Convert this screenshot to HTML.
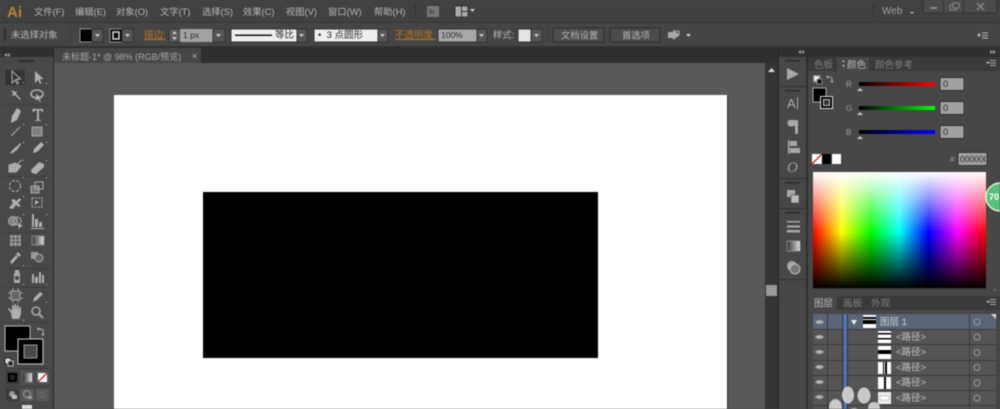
<!DOCTYPE html>
<html><head><meta charset="utf-8"><style>
html,body{margin:0;padding:0;background:#474747;width:1000px;height:409px;overflow:hidden}
svg{display:block;filter:blur(.45px)}
svg svg{filter:none}
text{font-family:"Liberation Sans","Noto Sans CJK SC",sans-serif;font-size:9.5px;fill:#bcbcbc}
.m{font-size:9.3px;fill:#b8b8b8}
.d{fill:#2c2c2c}
.i{fill:#b0b0b0}
.l{stroke:#383838;stroke-width:1}
.t{font-size:9.5px;fill:#2a2a2a}
</style></head><body>
<svg width="1000" height="409" viewBox="0 0 1000 409" xmlns="http://www.w3.org/2000/svg">
<defs>
<linearGradient id="hue"><stop offset="0" stop-color="#f00"/><stop offset=".165" stop-color="#ff0"/><stop offset=".335" stop-color="#0f0"/><stop offset=".5" stop-color="#0ff"/><stop offset=".67" stop-color="#00f"/><stop offset=".835" stop-color="#f0f"/><stop offset="1" stop-color="#f00"/></linearGradient>
<linearGradient id="v" x2="0" y2="1"><stop offset="0" stop-color="#fff"/><stop offset=".52" stop-color="#fff" stop-opacity="0"/><stop offset=".52" stop-color="#000" stop-opacity="0"/><stop offset="1" stop-color="#000"/></linearGradient>
<linearGradient id="rr"><stop offset="0" stop-color="#000"/><stop offset="1" stop-color="#f00"/></linearGradient>
<linearGradient id="gg"><stop offset="0" stop-color="#000"/><stop offset="1" stop-color="#0f0"/></linearGradient>
<linearGradient id="bb"><stop offset="0" stop-color="#000"/><stop offset="1" stop-color="#00f"/></linearGradient>
<linearGradient id="gr"><stop offset="0" stop-color="#333"/><stop offset="1" stop-color="#ddd"/></linearGradient>
</defs>

<!-- menu bar -->
<rect width="1000" height="23" fill="#414141"/>
<rect y="22" width="1000" height="1" fill="#363636"/>
<text x="7" y="17" style="font-size:15px;font-weight:bold;fill:#c08338">Ai</text>
<text class="m" x="34" y="15">文件(F)</text>
<text class="m" x="75" y="15">编辑(E)</text>
<text class="m" x="116" y="15">对象(O)</text>
<text class="m" x="160" y="15">文字(T)</text>
<text class="m" x="202" y="15">选择(S)</text>
<text class="m" x="243" y="15">效果(C)</text>
<text class="m" x="286" y="15">视图(V)</text>
<text class="m" x="328" y="15">窗口(W)</text>
<text class="m" x="374" y="15">帮助(H)</text>
<rect x="415" y="4" width="1" height="14" fill="#333"/>
<rect x="427" y="6" width="12" height="11" fill="#777"/><text x="429" y="14" style="font-size:6px;fill:#333">Br</text>
<rect x="455" y="6" width="13" height="11" fill="#aaa" stroke="#333"/><rect x="461" y="6" width="1" height="11" fill="#333"/><rect x="462" y="11" width="6" height="1" fill="#333"/>
<path d="M470 9h5l-2.500 3z" fill="#ccc"/>
<rect x="873" y="4" width="1" height="14" fill="#363636"/>
<text x="882" y="14" style="font-size:10px;fill:#a0a0a0">Web</text>
<path d="M910 12h4l-2 2z" fill="#bbb"/>
<rect x="923" y="-1" width="74" height="14" rx="2" fill="#4b4b4b" stroke="#333"/>
<rect x="943" y="0" width="1" height="13" fill="#333"/><rect x="963" y="0" width="1" height="13" fill="#333"/>
<rect x="930" y="7" width="7" height="2" fill="#888"/>
<rect x="950" y="5" width="6" height="5" fill="none" stroke="#888"/><rect x="953" y="3" width="6" height="5" fill="#4b4b4b" stroke="#888"/>
<path d="M977 3l7 7M984 3l-7 7" stroke="#888" stroke-width="1.500"/>

<!-- control bar -->
<rect y="23" width="1000" height="24" fill="#454545"/>
<rect y="46" width="1000" height="1" fill="#333"/>
<rect x="4" y="28" width="2" height="13" fill="#2e2e2e"/>
<text class="m" x="11" y="38">未选择对象</text>
<rect x="70" y="27" width="1" height="15" fill="#3a3a3a"/>
<rect x="80" y="29" width="12" height="13" fill="#000" stroke="#aaa" stroke-width=".8"/>
<rect x="92" y="29" width="11" height="13" fill="#555" stroke="#333"/><path d="M95 34h5l-2.500 3z" fill="#ccc"/>
<rect x="110" y="29" width="12" height="13" fill="#000" stroke="#aaa" stroke-width=".8"/><rect x="113" y="32" width="6" height="7" fill="#000" stroke="#ddd" stroke-width="1.500"/>
<rect x="122" y="29" width="11" height="13" fill="#555" stroke="#333"/><path d="M125 34h5l-2.500 3z" fill="#ccc"/>
<text x="144" y="38" style="fill:#b87524;text-decoration:underline">描边:</text>
<rect x="169" y="29" width="11" height="13" fill="#5a5a5a" stroke="#333"/>
<path d="M172 34l2.500-3 2.500 3zM172 37l2.500 3 2.500-3z" fill="#ccc"/>
<rect x="180" y="29" width="33" height="13" fill="#a2a2a2"/>
<text class="t" x="183" y="38" style="font-size:8.500px">1 px</text>
<rect x="213" y="29" width="12" height="13" fill="#555" stroke="#333"/><path d="M216 34h5l-2.500 3z" fill="#ccc"/>
<rect x="231" y="29" width="66" height="13" fill="#eee" stroke="#333"/>
<rect x="235" y="34.500" width="37" height="1.500" fill="#111"/>
<text class="t" x="275" y="38">等比</text>
<rect x="297" y="29" width="10" height="13" fill="#555" stroke="#333"/><path d="M299 34h5l-2.500 3z" fill="#ccc"/>
<rect x="314" y="29" width="64" height="13" fill="#eee" stroke="#333"/>
<text class="t" x="318" y="38" xml:space="preserve">•  3 点圆形</text>
<rect x="378" y="29" width="10" height="13" fill="#555" stroke="#333"/><path d="M380 34h5l-2.500 3z" fill="#ccc"/>
<text x="395" y="38" style="fill:#b87524;text-decoration:underline">不透明度:</text>
<rect x="438" y="29" width="39" height="13" fill="#a8a8a8" stroke="#333"/>
<text class="t" x="441" y="38" style="font-size:8.500px">100%</text>
<rect x="477" y="29" width="10" height="13" fill="#555" stroke="#333"/><path d="M479 34h5l-2.500 3z" fill="#ccc"/>
<text class="m" x="493" y="38">样式:</text>
<rect x="518" y="29" width="13" height="13" fill="#e4e4e4" stroke="#333"/>
<rect x="531" y="29" width="11" height="13" fill="#555" stroke="#333"/><path d="M534 34h5l-2.500 3z" fill="#ccc"/>
<rect x="547" y="27" width="1" height="15" fill="#3a3a3a"/>
<rect x="553" y="28" width="51" height="14" rx="1" fill="#4c4c4c" stroke="#2e2e2e"/>
<text class="m" x="561" y="38.500">文档设置</text>
<rect x="610" y="28" width="50" height="14" rx="1" fill="#4c4c4c" stroke="#2e2e2e"/>
<text class="m" x="622" y="38.500">首选项</text>
<path d="M668 32h5v-2l7 5-7 5v-2h-5z" fill="#aaa"/><path d="M674 31h5v4" stroke="#aaa" fill="none"/>
<path d="M686 34h5l-2.500 3z" fill="#ccc"/>
<path d="M977 35l3-2v4z" fill="#ccc"/><path d="M982 33h6M982 35.500h6M982 38h6" stroke="#bbb"/>

<!-- dark row -->
<rect y="47" width="1000" height="16" fill="#2f2f2f"/>
<rect x="54" y="48" width="147" height="15" fill="#464646"/>
<text class="m" x="62" y="60" style="font-size:9px;fill:#aaa">未标题-1* @ 98% (RGB/预览)</text>
<text x="192" y="59" style="font-size:9px;fill:#bbb">×</text>
<path d="M7 53l-3 2 3 2zM10 53l-3 2 3 2z" fill="#999"/>

<!-- canvas -->
<rect x="54" y="63" width="711" height="346" fill="#595959"/>
<rect x="114" y="95" width="613" height="314" fill="#fff"/>
<rect x="727" y="96" width="1" height="313" fill="#333"/>
<rect x="203" y="192" width="395" height="166" fill="#000"/>

<!-- scrollbar -->
<rect x="765" y="63" width="14" height="346" fill="#343434"/>
<path d="M768 72l3.500-4 3.500 4z" fill="#ddd"/>
<rect x="766" y="285" width="11" height="11" fill="#9a9a9a"/>

<!-- tool panel -->
<rect x="0" y="57" width="53" height="352" fill="#484848"/>
<rect x="53" y="47" width="1" height="362" fill="#262626"/>
<rect x="19" y="60" width="15" height="2" fill="#2b2b2b"/>
<rect x="5" y="70" width="20" height="15" rx="1" fill="#333"/>
<g class="i">
<path d="M12 71l0 12 3-3 2 4 1.500-.8-2-4 4-.2z" fill="none" stroke="#b0b0b0"/>
<path d="M35 71v12l3-3 2 4 1.500-.8-2-4 4-.2z"/>
<path d="M13 90l2 2 2-1-1 3 5 5-1 1-5-5-3 1 1-3-2-2 3 0z"/>
<ellipse cx="37" cy="94" rx="6" ry="4" fill="none" stroke="#b0b0b0" stroke-width="1.500"/><path d="M36 94v7l2-2 2 3 1-.5-1.500-3h3z"/>
<rect x="4" y="104" width="44" height="1" fill="#3c3c3c"/>
<path d="M17 108l4 3-4 9-6 3 1-7z"/>
<path d="M32 109h11v3h-1l-1-1.500h-2v9.500h2v1h-6v-1h2v-9.500h-2l-1 1.500h-1z"/>
<path d="M11 136l9-9" stroke="#b0b0b0" fill="none"/>
<rect x="32" y="127" width="10" height="9" fill="#808080" stroke="#aaa"/>
<path d="M10 154c2-5 6-6 10-11l1 1c-3 5-5 8-11 10z"/>
<path d="M33 153l1-4 7-7 3 3-7 7z"/>
<path d="M9 172l0-7 6-2 6 3-5 6zM16 165l6-5" fill="#aaa" stroke="#b0b0b0"/>
<path d="M32 173l-1-3 8-8 5 2 0 3-8 7z"/>
<rect x="4" y="176" width="44" height="1" fill="#3c3c3c"/>
<circle cx="15" cy="186" r="5.500" fill="none" stroke="#b0b0b0" stroke-dasharray="3 1.500"/>
<rect x="31" y="186" width="8" height="7" fill="#777" stroke="#aaa"/><rect x="35" y="182" width="8" height="7" fill="none" stroke="#aaa"/>
<path d="M9 208l4-5-2-3 3-1 2 2 4-3 1 2-3 3 3 3-2 1-3-2-3 4z"/>
<rect x="32" y="198" width="10" height="9" fill="none" stroke="#aaa" stroke-dasharray="2 1"/><path d="M35 200l4 2-4 3z"/>
<circle cx="13" cy="221" r="4.500" fill="#808080" stroke="#aaa"/><circle cx="17" cy="221" r="4" fill="none" stroke="#aaa"/><path d="M18 223l5 3-3 1-1 3z"/>
<path d="M32 214h2v13h-2zM35 219h3v8h-3zM39 222h3v5h-3zM31 228h13v1h-13z"/>
<rect x="4" y="232" width="44" height="1" fill="#3c3c3c"/>
<path d="M10 235h11v11h-11z" fill="#999"/><path d="M10 238.500h11M10 242h11M13.500 235v11M17.500 235v11" stroke="#333" stroke-dasharray="1 1"/>
<rect x="32" y="236" width="12" height="9" fill="url(#gr)" stroke="#888"/>
<path d="M11 263l-1-1 6-7 2 2-6 7zM16 254l2-2 3 3-2 2z"/>
<rect x="31" y="252" width="7" height="7" fill="#999"/><circle cx="39" cy="258" r="4" fill="#666" stroke="#aaa"/>
<rect x="4" y="268" width="44" height="1" fill="#3c3c3c"/>
<rect x="14" y="273" width="6" height="10" rx="1" fill="#aaa"/><circle cx="17" cy="278" r="2" fill="#444"/><rect x="15" y="270" width="4" height="3"/>
<path d="M32 274h2v9h-2zM35 277h3v6h-3zM39 272h2v11h-2zM42 275h2v8h-2z"/>
<rect x="4" y="287" width="44" height="1" fill="#3c3c3c"/>
<rect x="11" y="291" width="9" height="9" fill="#666" stroke="#aaa"/><path d="M8 293h2M8 298h2M21 293h2M21 298h2M13 288v2M18 288v2M13 301v2M18 301v2" stroke="#aaa"/>
<path d="M33 302l1-4 6-6 3 2-6 6z"/>
<path d="M11 313l-3-4 1-1 3 3v-6h1.500v5l1 -6h1.500v6l1-5h1.500v6l1-4h1.500v7l-2 5h-7z"/>
<circle cx="36" cy="311" r="4" fill="none" stroke="#aaa" stroke-width="1.500"/><path d="M39 314l4 4" stroke="#aaa" stroke-width="2"/>
</g>
<g fill="#d0d0d0"><path d="M23 82h1v1h-1zM46 83h1v1h-1zM23 124h1v1h-1zM46 124h1v1h-1zM23 142h1v1h-1zM46 142h1v1h-1zM23 160h1v1h-1zM46 160h1v1h-1zM23 177h1v1h-1zM46 177h1v1h-1zM23 196h1v1h-1zM23 214h1v1h-1zM46 214h1v1h-1zM23 265h1v1h-1zM23 284h1v1h-1zM46 284h1v1h-1zM46 302h1v1h-1zM23 320h1v1h-1z"/></g>
<rect x="4" y="322" width="44" height="1" fill="#3c3c3c"/>
<rect x="5" y="326" width="25" height="25" fill="#000" stroke="#bbb" stroke-width="1"/>
<rect x="18" y="339" width="25" height="25" fill="#000" stroke="#ccc" stroke-width="1"/>
<rect x="24" y="345" width="13" height="13" fill="#4a4a4a" stroke="#999"/>
<path d="M37 329h4c1 0 2 1 2 2v3" fill="none" stroke="#aaa" stroke-width="1.200"/><path d="M39 327v4l-2-2zM41 334h4l-2 2z" fill="#aaa"/>
<rect x="5" y="358" width="6" height="6" fill="#ddd" stroke="#222"/><rect x="8" y="361" width="5" height="5" fill="#222" stroke="#bbb"/>
<rect x="4" y="368" width="44" height="1" fill="#3c3c3c"/>
<rect x="6" y="371" width="13" height="13" fill="#3a3a3a"/><rect x="8" y="373" width="9" height="9" fill="#000"/><rect x="10" y="375" width="5" height="5" fill="#222"/>
<rect x="21" y="371" width="13" height="13" fill="#555"/><rect x="23" y="373" width="9" height="9" fill="url(#gr)"/>
<rect x="36" y="371" width="13" height="13" fill="#555"/><rect x="38" y="373" width="9" height="9" fill="#fff"/><path d="M38 382l9-9" stroke="#e02020" stroke-width="1.400"/>
<rect x="4" y="386" width="44" height="1" fill="#3c3c3c"/>
<rect x="6" y="389" width="13" height="12" fill="#3a3a3a"/><circle cx="12" cy="394" r="3" fill="#999"/><rect x="12" y="395" width="5" height="4" fill="#bbb"/>
<rect x="21" y="389" width="13" height="12" fill="#585858"/><circle cx="27" cy="394" r="3.500" fill="none" stroke="#999"/><rect x="28" y="396" width="4" height="3" fill="#999"/>
<rect x="36" y="389" width="13" height="12" fill="#585858"/><text x="39" y="398" style="font-size:8px;fill:#777">G</text>
<rect x="22" y="405" width="10" height="4" fill="#ddd"/>

<!-- right dock -->
<rect x="779" y="47" width="221" height="10" fill="#2f2f2f"/>
<path d="M801 50l-3 2 3 2zM804 50l-3 2 3 2z" fill="#999"/>
<path d="M990 50l3 2-3 2zM993 50l3 2-3 2z" fill="#999"/>
<rect x="779" y="57" width="27" height="352" fill="#474747"/>
<rect x="778" y="47" width="1" height="362" fill="#262626"/>
<rect x="806" y="47" width="2" height="362" fill="#2e2e2e"/>
<rect x="785" y="60" width="15" height="1.500" class="d"/>
<path d="M787 68l12 6-12 6z" fill="#a8a8a8"/>
<rect x="779" y="86" width="27" height="1" fill="#333"/>
<rect x="785" y="90" width="15" height="1.500" class="d"/>
<text x="787" y="108" style="font-size:13px;fill:#a8a8a8">A</text><rect x="797" y="97" width="1" height="12" fill="#a8a8a8"/>
<path d="M789 120h9v14h-3v-8h-2a3 3 0 0 1-4-6z" fill="#a8a8a8"/>
<path d="M788 140v14h1.500v-14zM790 141h7v5h-7zM790 148h10v5h-10z" fill="#a8a8a8"/>
<text x="787" y="172" style="font-size:15px;font-style:italic;font-family:'Liberation Serif',serif;fill:#a0a0a0">O</text>
<rect x="779" y="178" width="27" height="1" fill="#333"/>
<rect x="785" y="182" width="15" height="1.500" class="d"/>
<rect x="787" y="190" width="8" height="7" fill="#a8a8a8"/><rect x="791" y="195" width="8" height="8" fill="#bbb" stroke="#474747" stroke-width=".6"/>
<rect x="779" y="208" width="27" height="1" fill="#333"/>
<rect x="785" y="212" width="15" height="1.500" class="d"/>
<path d="M787 221h13v1.500h-13zM787 225.500h13v2h-13zM787 230h13v2.500h-13z" fill="#a8a8a8"/>
<rect x="787" y="241" width="13" height="10" fill="url(#gr)" stroke="#aaa" stroke-width=".6"/>
<circle cx="792" cy="266" r="5" fill="#a8a8a8"/><circle cx="795" cy="269" r="5" fill="#777" stroke="#b8b8b8"/>
<rect x="779" y="279" width="27" height="1" fill="#333"/>

<!-- color panel -->
<rect x="808" y="57" width="192" height="239" fill="#474747"/>
<rect x="808" y="57" width="192" height="14" fill="#3a3a3a"/>
<rect x="837" y="57" width="32" height="14" fill="#474747"/>
<text x="814" y="68" style="fill:#808080">色板</text>
<path d="M842 62l1.500-2 1.500 2zM842 65l1.500 2 1.500-2z" fill="#bbb"/>
<text x="847" y="68">颜色</text>
<text x="875" y="68" style="fill:#808080">颜色参考</text>
<path d="M986 62h4l-2 2z" fill="#ccc"/><path d="M990 60.500h6M990 63h6M990 65.500h6" stroke="#aaa"/>
<rect x="813" y="75" width="8" height="8" fill="#777"/><rect x="814" y="76" width="5" height="5" fill="#eee"/><rect x="817" y="79" width="5" height="5" fill="#111" stroke="#bbb" stroke-width=".6"/>
<path d="M827 77h3c1 0 2 1 2 2v3" fill="none" stroke="#aaa"/><path d="M828 75v4l-2-2zM830 81h4l-2 2z" fill="#aaa"/>
<rect x="813" y="88" width="13" height="14" fill="#000" stroke="#ccc" stroke-width=".8"/>
<rect x="820.500" y="96.500" width="12" height="12" fill="#000" stroke="#ddd"/><rect x="823.500" y="99.500" width="6" height="6" fill="#333" stroke="#ccc"/>
<text x="846" y="87" style="font-size:8px;fill:#a0a0a0">R</text>
<text x="846" y="111" style="font-size:8px;fill:#a0a0a0">G</text>
<text x="846" y="135" style="font-size:8px;fill:#a0a0a0">B</text>
<rect x="859" y="82" width="76" height="4" fill="url(#rr)"/>
<rect x="859" y="106" width="76" height="4" fill="url(#gg)"/>
<rect x="859" y="130" width="76" height="4" fill="url(#bb)"/>
<path d="M857 91l3-3 3 3zM857 115l3-3 3 3zM857 139l3-3 3 3z" fill="#ccc"/>
<rect x="940" y="77.500" width="24" height="13" fill="#a0a0a0" stroke="#333"/><text class="t" x="943" y="87">0</text>
<rect x="940" y="101.500" width="24" height="13" fill="#a0a0a0" stroke="#333"/><text class="t" x="943" y="111">0</text>
<rect x="940" y="125.500" width="24" height="13" fill="#a0a0a0" stroke="#333"/><text class="t" x="943" y="135">0</text>
<rect x="812" y="154" width="10" height="10" fill="#fff"/><path d="M812 164l10-10" stroke="#e02020" stroke-width="1.400"/>
<rect x="822" y="154" width="9" height="10" fill="#000"/>
<rect x="832" y="154" width="9" height="10" fill="#fff"/>
<text x="950" y="162" style="font-size:8px;fill:#a0a0a0">#</text>
<rect x="958" y="152.500" width="29" height="13" fill="#a0a0a0" stroke="#333"/>
<svg x="959" y="153" width="27" height="12"><text class="t" x="1" y="9" style="font-size:8.500px">000000</text></svg>
<rect x="813" y="172" width="173" height="116" fill="url(#hue)"/>
<rect x="813" y="172" width="173" height="116" fill="url(#v)"/>
<rect x="813" y="288" width="173" height="1" fill="#333"/>
<path d="M993 291l3-3v3z" fill="#666"/>
<circle cx="1000" cy="197" r="14" fill="#58c07a" stroke="#e8f0e8" stroke-width="1.500"/>
<text x="989" y="200" style="font-size:9px;font-weight:bold;fill:#fff">70</text>

<!-- layers panel -->
<rect x="808" y="295" width="192" height="114" fill="#474747"/>
<rect x="808" y="296" width="192" height="14" fill="#3a3a3a"/>
<rect x="808" y="296" width="29" height="14" fill="#474747"/>
<text x="814" y="306.500">图层</text>
<text x="843" y="306.500" style="fill:#808080">画板</text>
<text x="871" y="306.500" style="fill:#808080">外观</text>
<path d="M986 301h4l-2 2z" fill="#ccc"/><path d="M990 299.500h6M990 302h6M990 304.500h6" stroke="#aaa"/>

<rect x="813" y="314" width="183" height="95" fill="#555"/>
<rect x="813" y="314" width="183" height="15" fill="#5a6678"/>
<rect x="813" y="329" width="183" height="1" fill="#3a3a3a"/>
<rect x="813" y="344" width="183" height="1" fill="#3a3a3a"/>
<rect x="813" y="360" width="183" height="1" fill="#3a3a3a"/>
<rect x="813" y="375" width="183" height="1" fill="#3a3a3a"/>
<rect x="813" y="390" width="183" height="1" fill="#3a3a3a"/>
<rect x="813" y="405" width="183" height="1" fill="#3a3a3a"/>
<rect x="827" y="314" width="1" height="95" fill="#3a3a3a"/>
<rect x="842" y="314" width="1" height="95" fill="#3a3a3a"/>
<rect x="847" y="314" width="1" height="95" fill="#3a3a3a"/>
<rect x="969" y="314" width="1" height="95" fill="#3a3a3a"/>
<rect x="844" y="314" width="2.500" height="95" fill="#4a78d8"/>
<g fill="none" stroke="#999">
<circle cx="977" cy="322" r="3"/><circle cx="977" cy="337" r="3"/><circle cx="977" cy="352.500" r="3"/><circle cx="977" cy="367.500" r="3"/><circle cx="977" cy="383" r="3"/><circle cx="977" cy="398" r="3"/>
</g>
<g fill="#b0b0b0">
<path d="M815 322q4.500-4 9 0q-4.500 4-9 0z"/><path d="M815 337q4.500-4 9 0q-4.500 4-9 0z"/><path d="M815 352q4.500-4 9 0q-4.500 4-9 0z"/><path d="M815 367q4.500-4 9 0q-4.500 4-9 0z"/><path d="M815 382q4.500-4 9 0q-4.500 4-9 0z"/><path d="M815 397q4.500-4 9 0q-4.500 4-9 0z"/>
</g>
<path d="M851 320h6l-3 5z" fill="#eee"/>
<rect x="863" y="315" width="13" height="13" fill="#fff"/><rect x="863" y="317" width="13" height="2" fill="#000"/><rect x="863" y="320" width="13" height="4" fill="#000"/>
<text x="880" y="325" style="fill:#d4d4d4">图层 1</text>
<rect x="878" y="331" width="13" height="12" fill="#fff"/><rect x="878" y="333" width="13" height="1.500" fill="#000"/><rect x="878" y="338" width="13" height="1.500" fill="#000"/>
<rect x="878" y="346" width="13" height="13" fill="#fff"/><rect x="878" y="350" width="13" height="4" fill="#000"/>
<rect x="878" y="362" width="13" height="12" fill="#fff"/><rect x="883" y="362" width="1" height="12" fill="#000"/><rect x="885" y="362" width="2" height="12" fill="#000"/>
<rect x="878" y="377" width="13" height="12" fill="#fff"/><rect x="884" y="377" width="2" height="12" fill="#000"/>
<rect x="878" y="392" width="13" height="12" fill="#eee"/><rect x="880" y="396" width="9" height="4" fill="#fff" stroke="#999" stroke-width=".5"/>
<text x="896" y="340" style="fill:#c4c4c4">&lt;路径&gt;</text>
<text x="896" y="355" style="fill:#c4c4c4">&lt;路径&gt;</text>
<text x="896" y="370.500" style="fill:#c4c4c4">&lt;路径&gt;</text>
<text x="896" y="385.500" style="fill:#c4c4c4">&lt;路径&gt;</text>
<text x="896" y="401" style="fill:#c4c4c4">&lt;路径&gt;</text>
<path d="M991 314h5v5z" fill="#ddd"/>

<!-- paw -->
<g fill="#d0d0d0" fill-opacity=".95">
<ellipse cx="848" cy="395" rx="6" ry="8.500"/>
<ellipse cx="864" cy="395.500" rx="6.500" ry="8"/>
<ellipse cx="835.500" cy="407" rx="6.500" ry="8"/>
<ellipse cx="874" cy="408" rx="6" ry="6"/>
<ellipse cx="854" cy="411" rx="5" ry="3"/>
</g>
</svg>
</body></html>
